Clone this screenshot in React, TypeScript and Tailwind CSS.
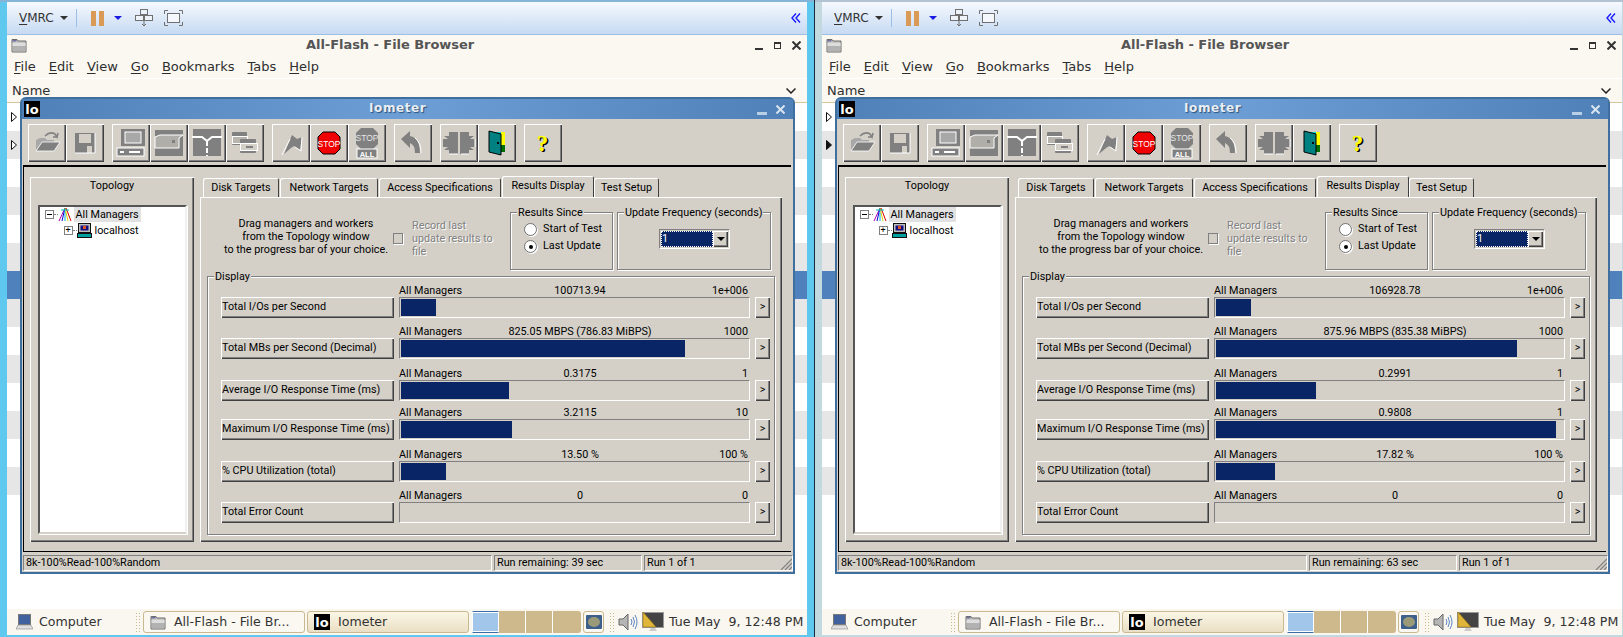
import { ReactNode } from 'react';

const GRAY = '#808080';

type Row = {
  name: string;
  gap: string;
  value: string;
  max: string;
  fill: number;
};

type Screen = {
  remaining: string;
  filledArrow: boolean;
  rows: Row[];
};

const leftScreen: Screen = {
  remaining: 'Run remaining: 39 sec',
  filledArrow: false,
  rows: [
    { name: 'Total I/Os per Second', gap: 'mt-[7px]', value: '100713.94', max: '1e+006', fill: 35 },
    { name: 'Total MBs per Second (Decimal)', gap: 'mt-[7px]', value: '825.05 MBPS (786.83 MiBPS)', max: '1000', fill: 284 },
    { name: 'Average I/O Response Time (ms)', gap: 'mt-[8px]', value: '0.3175', max: '1', fill: 108 },
    { name: 'Maximum I/O Response Time (ms)', gap: 'mt-[5px]', value: '3.2115', max: '10', fill: 111 },
    { name: '% CPU Utilization (total)', gap: 'mt-[8px]', value: '13.50 %', max: '100 %', fill: 45 },
    { name: 'Total Error Count', gap: 'mt-[7px]', value: '0', max: '0', fill: 0 },
  ],
};

const rightScreen: Screen = {
  remaining: 'Run remaining: 63 sec',
  filledArrow: true,
  rows: [
    { name: 'Total I/Os per Second', gap: 'mt-[7px]', value: '106928.78', max: '1e+006', fill: 35 },
    { name: 'Total MBs per Second (Decimal)', gap: 'mt-[7px]', value: '875.96 MBPS (835.38 MiBPS)', max: '1000', fill: 301 },
    { name: 'Average I/O Response Time (ms)', gap: 'mt-[8px]', value: '0.2991', max: '1', fill: 100 },
    { name: 'Maximum I/O Response Time (ms)', gap: 'mt-[5px]', value: '0.9808', max: '1', fill: 340 },
    { name: '% CPU Utilization (total)', gap: 'mt-[8px]', value: '17.82 %', max: '100 %', fill: 59 },
    { name: 'Total Error Count', gap: 'mt-[7px]', value: '0', max: '0', fill: 0 },
  ],
};

const stripes = [
  'bg-white', 'bg-[#e6e6e6]', 'bg-white', 'bg-[#e6e6e6]', 'bg-white', 'bg-[#e6e6e6]', 'bg-[#4f81bd]',
  'bg-[#e6e6e6]', 'bg-white', 'bg-[#e6e6e6]', 'bg-white', 'bg-[#e6e6e6]', 'bg-white', 'bg-[#e6e6e6]', 'bg-white',
];

const raised = 'shadow-[inset_1px_1px_0_#fff,inset_-1px_-1px_0_#404040,inset_-2px_-2px_0_#808080]';

function Mnemonic({ first, rest }: { first: string; rest: string }) {
  return (
    <span>
      <span className="underline underline-offset-2">{first}</span>
      {rest}
    </span>
  );
}

function FolderIcon({ className }: { className: string }) {
  return (
    <svg viewBox="0 0 16 16" className={className}>
      <path d="M1 2.5 L6 2.5 L7 4 L15 4 L15 15 L1 15 Z" fill="#c9c7c3" stroke="#6b6b6b" />
      <path d="M1.5 6 H14.5 V14.5 H1.5 Z" fill="#b2b2b2" />
      <path d="M1.5 6 H14.5 V9 H1.5 Z" fill="#dddddd" />
      <rect x="1.5" y="3" width="4" height="1.5" fill="#6f6fa8" />
    </svg>
  );
}

function LoIcon({ className }: { className: string }) {
  return (
    <span className={`flex shrink-0 items-center justify-center bg-black font-bold text-white [font-family:'DejaVu_Sans',sans-serif] ${className}`}>
      lo
    </span>
  );
}

function ToolIcon({ children }: { children: ReactNode }) {
  return (
    <svg viewBox="0 0 38 38" className="h-[38px] w-[38px]">
      {children}
    </svg>
  );
}

const tools: ReactNode[][] = [
  [
    <g key="open">
      <path d="M8 26 L8 16 L12 14 L17 14 L19 16 L26 16 L26 18 L14 18 Z" fill="#a8a8a8" />
      <path d="M8 27 L14 18 L32 18 L26 27 Z" fill={GRAY} stroke="#fff" strokeWidth="0.8" />
      <path d="M17 12 Q22 7 27 10 L29 13 L30 9 M29 13 L25 13" fill="none" stroke={GRAY} strokeWidth="1.6" />
    </g>,
    <g key="save">
      <path d="M9 9 H29 V29 H9 Z" fill={GRAY} />
      <rect x="13" y="10" width="12" height="9" fill="#d4d0c8" />
      <rect x="21" y="22" width="5" height="7" fill="#d4d0c8" />
      <path d="M29 9 V29 H9" fill="none" stroke="#fff" />
    </g>,
  ],
  [
    <g key="computer">
      <path d="M9 5 H33 V22 H9 Z" fill={GRAY} />
      <rect x="13" y="8" width="16" height="11" fill="#a8a8a8" stroke="#fff" />
      <rect x="5" y="24" width="27" height="8" fill={GRAY} stroke="#fff" />
      <rect x="8" y="27" width="4" height="2" fill="#fff" />
      <rect x="17" y="27" width="11" height="2" fill="#fff" />
    </g>,
    <g key="disk">
      <rect x="5" y="6" width="28" height="26" fill={GRAY} />
      <path d="M5 13 L10 11 H33 L29 14 V24 H5 Z" fill="#b0aea8" stroke="#fff" />
      <rect x="22" y="16" width="3" height="3" fill={GRAY} />
    </g>,
    <g key="network">
      <rect x="5" y="5" width="28" height="27" fill={GRAY} />
      <path d="M4 13 H14 L19 17 L24 13 H34" fill="none" stroke="#fff" strokeWidth="2" />
      <path d="M19 17 V32" fill="none" stroke="#fff" strokeWidth="2" strokeDasharray="5 2" />
    </g>,
    <g key="workers">
      <rect x="6" y="8" width="15" height="13" rx="1" fill={GRAY} />
      <rect x="6.5" y="12.5" width="15" height="7" fill="#b8b5ae" stroke="#fff" />
      <rect x="14" y="15" width="16" height="14" rx="1" fill={GRAY} />
      <rect x="14.5" y="19.5" width="17" height="7" fill="#d4d0c8" stroke="#fff" />
      <rect x="20" y="22" width="7" height="2" fill={GRAY} />
    </g>,
  ],
  [
    <g key="flag">
      <path d="M12 30 L20 11 L25 15 L30 13 L28 26 L22 22 L19 24 Z" fill={GRAY} />
      <path d="M10 31 L18 15" stroke="#fff" strokeWidth="1" />
      <path d="M30 13 L29 27 L23 23" fill="none" stroke="#fff" strokeWidth="1" />
    </g>,
    <g key="stop">
      <path d="M13 8 H25 L30 13 V25 L25 30 H13 L8 25 V13 Z" fill="#f00000" stroke="#000" />
      <text x="19" y="22.5" textAnchor="middle" fill="#fff" fontSize="8.5" fontFamily="Liberation Sans">STOP</text>
    </g>,
    <g key="stopall">
      <path d="M13 4 H25 L30 9 V20 L25 25 H13 L8 20 V9 Z" fill={GRAY} />
      <text x="19" y="17" textAnchor="middle" fill="#e6e6e6" fontSize="8.5" fontFamily="Liberation Sans">STOP</text>
      <rect x="9" y="25" width="20" height="9" fill={GRAY} stroke="#fff" />
      <text x="19" y="32.5" textAnchor="middle" fill="#fff" fontSize="7.5" fontWeight="bold" fontFamily="Liberation Sans">ALL</text>
    </g>,
  ],
  [
    <g key="undo">
      <path d="M7 15 L16 7 V12 Q26 14 26 29 H21 Q21 21 16 19 V24 Z" fill={GRAY} />
      <path d="M27 29 Q27 18 21 14" fill="none" stroke="#fff" />
    </g>,
  ],
  [
    <g key="split">
      <path d="M4 12 H9 V8 H18 V30 H9 V26 H4 L8 23 H3 V15 H8 Z" fill={GRAY} />
      <path d="M34 12 H29 V8 H20 V30 H29 V26 H34 L30 23 H35 V15 H30 Z" fill={GRAY} />
      <path d="M21 30 H29 M35 23 V15 M9 30 H18" stroke="#fff" />
    </g>,
    <g key="door">
      <rect x="14" y="8" width="13" height="20" fill="#00d8d8" />
      <path d="M23 8 H27 V21 H23 Z" fill="#ffff00" />
      <path d="M23 21 H27 V28 H23 Z" fill="#007000" />
      <path d="M11 7 L23 10 V31 L11 28 Z" fill="#008080" stroke="#000" />
      <rect x="19" y="18" width="2" height="2" fill="#000" />
    </g>,
  ],
  [
    <g key="help">
      <text x="20" y="28" textAnchor="middle" fill="#000" fontSize="23" fontWeight="bold" fontFamily="Liberation Serif">?</text>
      <text x="18.5" y="27" textAnchor="middle" fill="#ffff00" fontSize="23" fontWeight="bold" fontFamily="Liberation Serif">?</text>
    </g>,
  ],
];

function VmToolbar() {
  return (
    <div className="flex h-[33px] w-[800px] shrink-0 items-center border-b border-[#9dbfe6] bg-gradient-to-b from-[#f6f9fe] to-[#c6daf2] pl-[12px] pr-[6px]">
      <span className="text-[12px] text-[#333] [font-family:'DejaVu_Sans',sans-serif]">
        <Mnemonic first="V" rest="MRC" />
      </span>
      <span className="ml-[6px] h-0 w-0 border-x-[4px] border-t-[4px] border-x-transparent border-t-[#333]" />
      <span className="ml-[8px] h-[18px] w-px bg-[#9dbfe6]" />
      <span className="ml-[14px] flex gap-[3px]">
        <span className="h-[15px] w-[5px] bg-[#d89a55]" />
        <span className="h-[15px] w-[5px] bg-[#d89a55]" />
      </span>
      <span className="ml-[10px] h-0 w-0 border-x-[4px] border-t-[4px] border-x-transparent border-t-[#1a1ae0]" />
      <svg viewBox="0 0 18 18" className="ml-[13px] h-[18px] w-[18px]" fill="#eef3fa" stroke="#707070">
        <rect x="5.5" y="0.5" width="7" height="5" />
        <rect x="0.5" y="6.5" width="8" height="5" />
        <rect x="9.5" y="6.5" width="8" height="5" />
        <path d="M9 12 V17 M7 15 L9 17 L11 15" fill="none" />
      </svg>
      <svg viewBox="0 0 19 16" className="ml-[11px] h-[16px] w-[19px]" fill="none" stroke="#707070">
        <rect x="3.5" y="3.5" width="12" height="9" fill="#f4f8fd" />
        <path d="M0.5 4 V0.5 H4 M15 0.5 H18.5 V4 M18.5 12 V15.5 H15 M4 15.5 H0.5 V12" />
      </svg>
      <svg viewBox="0 0 10 10" className="ml-auto h-[10px] w-[10px]" fill="none" stroke="#1a1aff" strokeWidth="1.4">
        <path d="M5 0.5 L1 5 L5 9.5 M9 0.5 L5 5 L9 9.5" />
      </svg>
    </div>
  );
}

function FileBrowser({ filledArrow }: { filledArrow: boolean }) {
  const menus = [
    ['F', 'ile'],
    ['E', 'dit'],
    ['V', 'iew'],
    ['G', 'o'],
    ['B', 'ookmarks'],
    ['T', 'abs'],
    ['H', 'elp'],
  ];
  return (
    <div className="flex flex-1 flex-col overflow-hidden bg-white [font-family:'DejaVu_Sans',sans-serif] text-[#2e2e2e]">
      <div className="flex h-[20px] items-center bg-[#fbf8f2] pl-[4px] pr-[6px]">
        <FolderIcon className="h-[16px] w-[16px]" />
        <span className="ml-[279px] text-[13px] font-bold tracking-[-0.05px] text-[#555]">All-Flash - File Browser</span>
        <span className="ml-auto mt-[8px] h-[2px] w-[8px] bg-[#333]" />
        <span className="ml-[11px] h-[7px] w-[7px] border border-t-2 border-[#333]" />
        <svg viewBox="0 0 9 9" className="ml-[11px] h-[9px] w-[9px]" stroke="#333" strokeWidth="2">
          <path d="M0.5 0.5 L8.5 8.5 M8.5 0.5 L0.5 8.5" />
        </svg>
      </div>
      <div className="flex h-[23px] items-center gap-[13px] bg-[#fbf8f2] pl-[7px] text-[13px]">
        {menus.map(([first, rest]) => (
          <Mnemonic key={first} first={first} rest={rest} />
        ))}
      </div>
      <div className="flex h-[25px] items-center border-y border-b-[#d8c49a] border-t-white bg-[#fbf8f2] pl-[5px] pr-[8px] text-[13px]">
        <span>Name</span>
        <svg viewBox="0 0 10 6" className="ml-auto mr-[3px] h-[6px] w-[10px]" fill="none" stroke="#222" strokeWidth="1.5">
          <path d="M0.5 0.5 L5 5 L9.5 0.5" />
        </svg>
      </div>
      {stripes.map((stripe, i) => (
        <div key={i} className={`flex h-[28px] shrink-0 items-center pl-[4px] ${stripe}`}>
          {i < 2 && (
            <svg viewBox="0 0 6 10" className="h-[10px] w-[6px]">
              <path d="M0.5 0.5 L5.5 5 L0.5 9.5 Z" fill={i === 1 && filledArrow ? '#111' : 'white'} stroke="#111" />
            </svg>
          )}
        </div>
      ))}
    </div>
  );
}

function ToolBar() {
  return (
    <div className="flex h-[46px] shrink-0 gap-[8px] pl-[6px] pt-[5px]">
      {tools.map((group, g) => (
        <div key={g} className="flex">
          {group.map((icon, i) => (
            <div key={i} className={`h-[38px] w-[38px] ${raised}`}>
              <ToolIcon>{icon}</ToolIcon>
            </div>
          ))}
        </div>
      ))}
    </div>
  );
}

function TopologyPane() {
  return (
    <div className={`flex h-[365px] w-[164px] shrink-0 flex-col items-center pt-[2px] ${raised}`}>
      <span className="h-[26px] leading-[13px]">Topology</span>
      <div className="h-[329px] w-[149px] border-2 border-b-[#d4d0c8] border-l-[#555] border-r-[#f0f0f0] border-t-[#555] bg-white pl-[5px] shadow-[1px_1px_0_#fff]">
        <div className="flex h-[15px] items-center">
          <span className="flex h-[9px] w-[9px] items-center justify-center border border-[#808080] bg-white">
            <span className="h-px w-[5px] bg-black" />
          </span>
          <span className="w-[4px] border-t border-dotted border-[#808080]" />
          <svg viewBox="0 0 15 15" className="h-[15px] w-[15px]" fill="none" strokeWidth="1">
            <path d="M7 1 L1 14" stroke="#b000b0" />
            <path d="M7 1 L4 14" stroke="#0000d0" />
            <path d="M7 1 L7 14" stroke="#00b0e0" />
            <path d="M7 1 L10 14" stroke="#e0d000" />
            <path d="M8 1 L13 14" stroke="#d00000" />
            <path d="M3 3 H11" stroke="#00c0c0" />
          </svg>
          <span className="ml-px bg-[#e1e1e1] px-[2px] leading-[15px]">All Managers</span>
        </div>
        <div className="mt-px flex h-[15px] items-center pl-[19px]">
          <span className="flex h-[9px] w-[9px] items-center justify-center border border-[#808080] bg-white">
            <span className="text-[9px] leading-[7px]">+</span>
          </span>
          <span className="w-[4px] border-t border-dotted border-[#808080]" />
          <svg viewBox="0 0 15 15" className="h-[15px] w-[15px]">
            <rect x="1.5" y="0.5" width="12" height="9" fill="#c0c0c0" stroke="#111" />
            <rect x="3.5" y="2.5" width="8" height="5" fill="#101080" />
            <rect x="6" y="3" width="3" height="3" fill="#e05020" />
            <rect x="0.5" y="10.5" width="14" height="4" fill="#00a0a0" stroke="#111" />
          </svg>
          <span className="ml-[3px] leading-[15px]">localhost</span>
        </div>
      </div>
    </div>
  );
}

function Tabs() {
  const tabClass =
    'flex h-[19px] items-center rounded-t-[2px] pt-px shadow-[inset_1px_1px_0_#fff,inset_-1px_0_0_#404040]';
  return (
    <div className="flex h-[20px] items-end pl-[3px]">
      <div className={`${tabClass} w-[76px] justify-center`}>Disk Targets</div>
      <div className={`${tabClass} ml-[1px] w-[98px] justify-center`}>Network Targets</div>
      <div className={`${tabClass} ml-[1px] w-[122px] justify-center`}>Access Specifications</div>
      <div className="relative z-10 ml-[1px] flex h-[21px] w-[92px] items-center justify-center rounded-t-[2px] bg-[#d4d0c8] shadow-[inset_1px_1px_0_#fff,inset_-1px_0_0_#404040]">
        Results Display
      </div>
      <div className={`${tabClass} w-[65px] justify-center`}>Test Setup</div>
    </div>
  );
}

function Group({ label, className, children }: { label: string; className: string; children: ReactNode }) {
  return (
    <div className={`relative border border-[#808080] shadow-[inset_1px_1px_0_#fff,1px_1px_0_#fff] ${className}`}>
      <span className="absolute -top-[7px] left-[6px] whitespace-nowrap bg-[#d4d0c8] px-px leading-[13px]">{label}</span>
      {children}
    </div>
  );
}

function Radio({ label, on }: { label: string; on: boolean }) {
  return (
    <div className="flex h-[17px] items-center">
      <span className="flex h-[13px] w-[13px] items-center justify-center rounded-full border border-[#707070] bg-white shadow-[1px_1px_0_#fff]">
        {on && <span className="h-[4px] w-[4px] rounded-full bg-black" />}
      </span>
      <span className="ml-[6px]">{label}</span>
    </div>
  );
}

function MeterRow({ row }: { row: Row }) {
  return (
    <div className={`flex items-end ${row.gap}`}>
      <div className={`flex h-[21px] w-[173px] items-center whitespace-nowrap pl-[1px] ${raised}`}>{row.name}</div>
      <div className="ml-[5px] w-[351px]">
        <div className="grid h-[13px] grid-cols-[100px_162px_89px] leading-[13px]">
          <span>All Managers</span>
          <span className="text-center">{row.value}</span>
          <span className="pr-[2px] text-right">{row.max}</span>
        </div>
        <div className="h-[21px] border border-b-white border-l-[#808080] border-r-white border-t-[#808080] p-px">
          <div className="h-full bg-[#0a2566]" style={{ width: row.fill }} />
        </div>
      </div>
      <div className={`ml-[5px] flex h-[21px] w-[15px] items-center justify-center ${raised}`}>&gt;</div>
    </div>
  );
}

function ResultsPane({ rows }: { rows: Row[] }) {
  return (
    <div className="w-[582px] shrink-0">
      <Tabs />
      <div className={`flex h-[345px] flex-col pl-[7px] ${raised}`}>
        <div className="flex h-[79px] shrink-0">
          <div className="ml-[13px] mt-[20px] w-[172px] whitespace-nowrap text-center leading-[13px]">
            Drag managers and workers
            <br />
            from the Topology window
            <br />
            to the progress bar of your choice.
          </div>
          <div className="ml-px mt-[36px] h-[11px] w-[10px] border border-[#808080] shadow-[1px_1px_0_#fff]" />
          <div className="ml-[9px] mt-[22px] w-[90px] leading-[13px] text-[#808080] [text-shadow:1px_1px_0_#fff]">
            Record last
            <br />
            update results to
            <br />
            file
          </div>
          <Group label="Results Since" className="ml-[8px] mt-[15px] h-[58px] w-[103px] pl-[13px] pt-[8px]">
            <Radio label="Start of Test" on={false} />
            <Radio label="Last Update" on />
          </Group>
          <Group label="Update Frequency (seconds)" className="ml-[4px] mt-[15px] h-[58px] w-[154px] pl-[41px] pt-[16px]">
            <div className="flex h-[20px] w-[71px] items-center border border-b-white border-l-[#808080] border-r-white border-t-[#808080] p-px">
              <div className="h-full w-[52px] border border-dotted border-white bg-[#0a2566] leading-[14px] text-white">1</div>
              <div className={`flex h-full w-[15px] items-center justify-center ${raised}`}>
                <span className="h-0 w-0 border-x-[4px] border-t-[4px] border-x-transparent border-t-black" />
              </div>
            </div>
          </Group>
        </div>
        <Group label="Display" className="h-[259px] w-[568px] pl-[13px]">
          {rows.map((row) => (
            <MeterRow key={row.name} row={row} />
          ))}
        </Group>
      </div>
    </div>
  );
}

function StatusBar({ remaining }: { remaining: string }) {
  const cell = 'flex h-[16px] items-center border border-b-white border-l-[#808080] border-r-white border-t-[#808080] pl-[2px]';
  return (
    <div className="flex h-[20px] shrink-0 gap-[2px] pl-[1px] pt-[3px]">
      <div className={`${cell} w-[469px]`}>8k-100%Read-100%Random</div>
      <div className={`${cell} w-[148px]`}>{remaining}</div>
      <div className={`${cell} relative w-[149px]`}>
        Run 1 of 1
        <svg viewBox="0 0 12 12" className="absolute bottom-0 right-0 h-[12px] w-[12px]" stroke="#808080" strokeWidth="1.2">
          <path d="M1 12 L12 1 M5 12 L12 5 M9 12 L12 9" />
        </svg>
      </div>
    </div>
  );
}

function Iometer({ screen }: { screen: Screen }) {
  return (
    <div className="absolute left-[13px] top-[62px] flex h-[477px] w-[775px] flex-col rounded-t-[6px] border-2 border-[#3f6f9f] bg-[#d4d0c8] text-[10.8px] text-black [font-family:'Roboto',sans-serif]">
      <div className="flex h-[20px] shrink-0 items-center bg-gradient-to-r from-[#4f81b8] via-[#6d9fd6] to-[#4f81b8] pl-[2px] pr-[8px]">
        <LoIcon className="h-[16px] w-[16px] text-[13px] leading-none" />
        <span className="mb-[2px] ml-[329px] text-[12px] font-bold tracking-[0.6px] text-[#e8eef5] [font-family:'DejaVu_Sans',sans-serif] [text-shadow:1px_1px_1px_#2b4f78]">
          Iometer
        </span>
        <span className="ml-auto mt-[8px] h-[3px] w-[10px] bg-[#b8cfe6]" />
        <svg viewBox="0 0 9 9" className="ml-[9px] h-[9px] w-[9px]" stroke="#d8e4f0" strokeWidth="2">
          <path d="M0.5 0.5 L8.5 8.5 M8.5 0.5 L0.5 8.5" />
        </svg>
      </div>
      <ToolBar />
      <div className="ml-px mr-[2px] flex h-[387px] shrink-0 gap-[6px] border-b border-l border-t-2 border-b-black border-l-black border-t-black pl-[6px] pt-[10px]">
        <TopologyPane />
        <ResultsPane rows={screen.rows} />
      </div>
      <StatusBar remaining={screen.remaining} />
    </div>
  );
}

function Taskbar() {
  const dots = 'h-[20px] w-[5px] shrink-0 bg-[radial-gradient(#c9b98f_1px,transparent_1px)] bg-[length:3px_3px]';
  return (
    <div className="flex h-[26px] w-[800px] shrink-0 items-center whitespace-nowrap bg-[#faf7f0] pl-[9px] text-[12.6px] text-[#333] [font-family:'DejaVu_Sans',sans-serif]">
      <svg viewBox="0 0 17 16" className="h-[16px] w-[17px] shrink-0">
        <rect x="2.5" y="0.5" width="12" height="10" fill="#41629f" stroke="#777" />
        <path d="M2 11 H15 L17 15 H0 Z" fill="#e0e0e0" stroke="#888" strokeWidth="0.6" />
      </svg>
      <span className="ml-[6px] w-[66px] shrink-0">Computer</span>
      <span className={`ml-[30px] ${dots}`} />
      <div className="ml-[3px] flex h-[22px] w-[162px] shrink-0 items-center rounded-[3px] border border-[#c9b98f] bg-[#fbf8f2] pl-[6px]">
        <FolderIcon className="h-[16px] w-[16px]" />
        <span className="ml-[8px]">All-Flash - File Br...</span>
      </div>
      <div className="ml-[2px] flex h-[22px] w-[162px] shrink-0 items-center rounded-[3px] border border-[#c9b98f] bg-gradient-to-b from-[#fbf6e6] to-[#eadfc4] pl-[6px]">
        <LoIcon className="h-[16px] w-[16px] text-[13px] leading-none" />
        <span className="ml-[8px]">Iometer</span>
      </div>
      <div className="ml-[3px] flex h-[22px] w-[109px] shrink-0 overflow-hidden rounded-r-[3px] bg-[#cdb98c]">
        <div className="h-full w-[27px] border-x border-y border-x-white border-y-[#3b6ea8] bg-[#a2c6ea] shadow-[inset_0_-1px_0_#fff,inset_0_1px_0_#fff]" />
        <div className="h-full w-[27px] border-r border-white" />
        <div className="h-full w-[27px] border-r border-white" />
      </div>
      <div className="ml-[2px] flex h-[22px] w-[21px] shrink-0 items-center justify-center rounded-[3px] border border-[#c9b98f]">
        <svg viewBox="0 0 16 14" className="h-[14px] w-[16px]">
          <rect width="16" height="14" rx="1" fill="#3d5f8c" />
          <ellipse cx="8" cy="7" rx="6" ry="5" fill="#9a9a78" />
        </svg>
      </div>
      <span className={`ml-[5px] ${dots}`} />
      <svg viewBox="0 0 21 18" className="ml-[4px] h-[18px] w-[21px] shrink-0" fill="none">
        <path d="M1 6 H5 L10 1 V17 L5 12 H1 Z" fill="#b5b5b5" stroke="#666" />
        <path d="M13 6 Q15 9 13 12 M15 4 Q18 9 15 14 M17 2 Q21 9 17 16" stroke="#5c86c4" />
      </svg>
      <svg viewBox="0 0 22 20" className="ml-[3px] h-[20px] w-[22px] shrink-0">
        <rect x="0.5" y="0.5" width="21" height="15" fill="#444" stroke="#999" />
        <path d="M1 0 L14 15 H1 Z" fill="#e0b63a" stroke="#8a6a10" strokeWidth="0.5" />
        <path d="M7 19 H15 L13 16 H9 Z" fill="#ccc" />
      </svg>
      <span className="ml-[5px] whitespace-pre">Tue May  9, 12:48 PM</span>
    </div>
  );
}

function Console({ screen }: { screen: Screen }) {
  return (
    <div className="flex h-full w-[800px] flex-col">
      <VmToolbar />
      <div className="relative flex h-[600px] w-[800px] flex-col">
        <FileBrowser filledArrow={screen.filledArrow} />
        <Taskbar />
        <Iometer screen={screen} />
      </div>
    </div>
  );
}

export default function App() {
  return (
    <div className="flex h-[637px] w-[1623px] overflow-hidden">
      <div className="h-full w-[814px] shrink-0 border-t-2 border-[#85b5d6] bg-[#5fc8ee] pl-[7px]">
        <Console screen={leftScreen} />
      </div>
      <div className="h-full w-px shrink-0 bg-[#1b2b3b]" />
      <div className="h-full flex-1 border-t-2 border-[#b3c3d3] bg-[#c3d9e0] pl-[7px]">
        <Console screen={rightScreen} />
      </div>
    </div>
  );
}
